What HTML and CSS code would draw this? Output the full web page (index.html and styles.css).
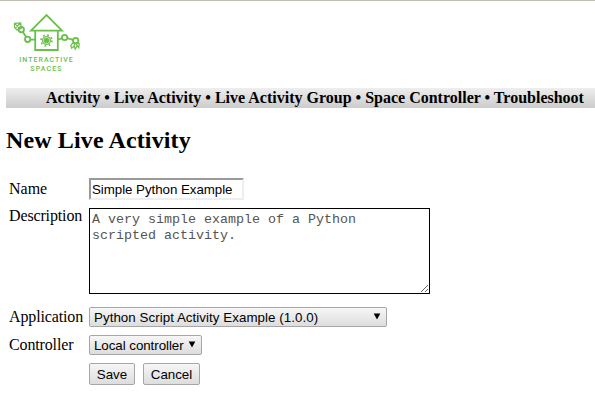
FILE: index.html
```html
<!DOCTYPE html>
<html lang="en">
<head>
<meta charset="utf-8">
<title>New Live Activity</title>
<link rel="stylesheet" href="styles.css">
</head>
<body>
<header class="brand">
<svg class="logo" width="80" height="68" viewBox="6 8 80 68" role="img" aria-label="Interactive Spaces">
<g fill="none" stroke="#6abf4b" stroke-width="1.8">
<path d="M31 30.7 46.5 15 62 30.7Z"/>
<path d="M35.2 31V50H57.8V31"/>
<circle cx="46.5" cy="40.5" r="3.9" stroke-width="1.3"/>
<circle cx="46.5" cy="40.5" r="5.5" stroke-width="1.6" stroke-dasharray="1.8 2.52"/>
<circle cx="27.7" cy="39.3" r="2.7"/>
<circle cx="21.3" cy="29.6" r="2.7"/>
<path d="M30.5 39.7H35M26.1 37 22.9 32"/>
<circle cx="64.6" cy="37.5" r="2.7"/>
<circle cx="75.7" cy="40.6" r="2.7"/>
<path d="M58 39.5 62 38.4M67.3 38.2 73 39.9"/>
<path d="M14.5 23.3 20.7 23 21.2 28.3 17 30 14.5 27.3ZM14.5 23.3 20 29M20.7 23 15 28.3" stroke-width="1.2"/>
<path d="M73.3 42.5 70.7 45.5 71.7 48.2 74.2 46.1 75.2 49.2 77.2 45.5 78.8 47.8 79.2 43.7 77 42.5M74.8 43.2 74.2 46.1M75.8 43.5 77.2 45.5" stroke-width="1.2"/>
</g>
<circle cx="46.5" cy="40.5" r="2.8" fill="#6abf4b"/>
<g class="wordmark"><text x="19.3" y="62" textLength="53.5">INTERACTIVE</text><text x="30.3" y="71" textLength="31.3">SPACES</text></g>
</svg>
</header>
<nav class="nav">Activity • Live Activity • Live Activity Group • Space Controller • Troubleshoot</nav>
<main>
<h1 class="title">New Live Activity</h1>
<form class="form">
<label for="name">Name</label>
<input id="name" class="name" type="text" value="Simple Python Example">
<label class="description-label" for="description">Description</label>
<textarea id="description" class="description" spellcheck="false">A very simple example of a Python scripted activity.</textarea>
<label for="application">Application</label>
<div class="picker wide"><select id="application"><option>Python Script Activity Example (1.0.0)</option></select><svg class="arrow" width="8" height="7" viewBox="0 0 8 7"><path d="M.7.5H7.3L4 6.5Z"/></svg></div>
<label for="controller">Controller</label>
<div class="picker narrow"><select id="controller"><option>Local controller</option></select><svg class="arrow" width="8" height="7" viewBox="0 0 8 7"><path d="M.7.5H7.3L4 6.5Z"/></svg></div>
<div class="actions"><button class="save" type="button">Save</button><button class="cancel" type="button">Cancel</button></div>
</form>
</main>
</body>
</html>
```
FILE: styles.css
```css
* { box-sizing: border-box; }
body {
  margin: 0;
  height: 407px;
  overflow: hidden;
  border-top: 1px solid #c1beb3;
  padding-left: 6px;
  background: #fff;
  color: #000;
  font: 16px/20px "Liberation Serif", serif;
}
.brand { height: 87px; padding-top: 7px; }
.logo { display: block; }
.wordmark { fill: #6abf4b; font: 500 7px Roboto, sans-serif; }
.nav {
  height: 20px;
  padding-left: 40px;
  background: linear-gradient(#eee, #ccc);
  font-weight: bold;
  white-space: nowrap;
}
.title { margin: 18px 0 24px; font-size: 24px; line-height: 28px; letter-spacing: .13px; }
.form {
  display: grid;
  grid-template-columns: 80px max-content;
  grid-template-rows: 22px 91px 20px 20px 22px;
  row-gap: 8px;
  padding-left: 3px;
}
.form label { line-height: 20px; letter-spacing: -.14px; }
.form label[for="name"] { padding-top: 1px; letter-spacing: 0; }
.form .description-label { margin-top: -2px; }
.name, select, button { font: 13.333px "Liberation Sans", sans-serif; color: #000; }
.name {
  width: 155px;
  height: 22px;
  padding: 1px;
  border: 2px solid;
  border-color: #9a9a9a #eee #eee #9a9a9a;
  outline: none;
  letter-spacing: -.05px;
}
.description {
  width: 341px;
  height: 86px;
  margin: 0;
  padding: 3px 2px 2px;
  border: 1px solid #000;
  border-radius: 0;
  outline: none;
  color: #555;
  font: 13.333px/16px "Liberation Mono", monospace;
}
.picker { position: relative; height: 20px; }
.wide { width: 298px; }
.wide select { letter-spacing: .05px; }
.narrow { width: 113px; }
.narrow select { letter-spacing: -.05px; }
select {
  display: block;
  width: 100%;
  height: 20px;
  padding: 0 4px;
  appearance: none;
}
select, button {
  border: 1px solid #a6a6a6;
  border-radius: 2px;
  background: linear-gradient(#f6f6f6, #ddd);
}
.arrow { position: absolute; top: 6px; right: 6px; pointer-events: none; }
.actions { grid-column: 2; display: flex; gap: 8px; }
button { height: 22px; padding: 0; }
.save { width: 46px; }
.cancel { width: 57px; }
```
